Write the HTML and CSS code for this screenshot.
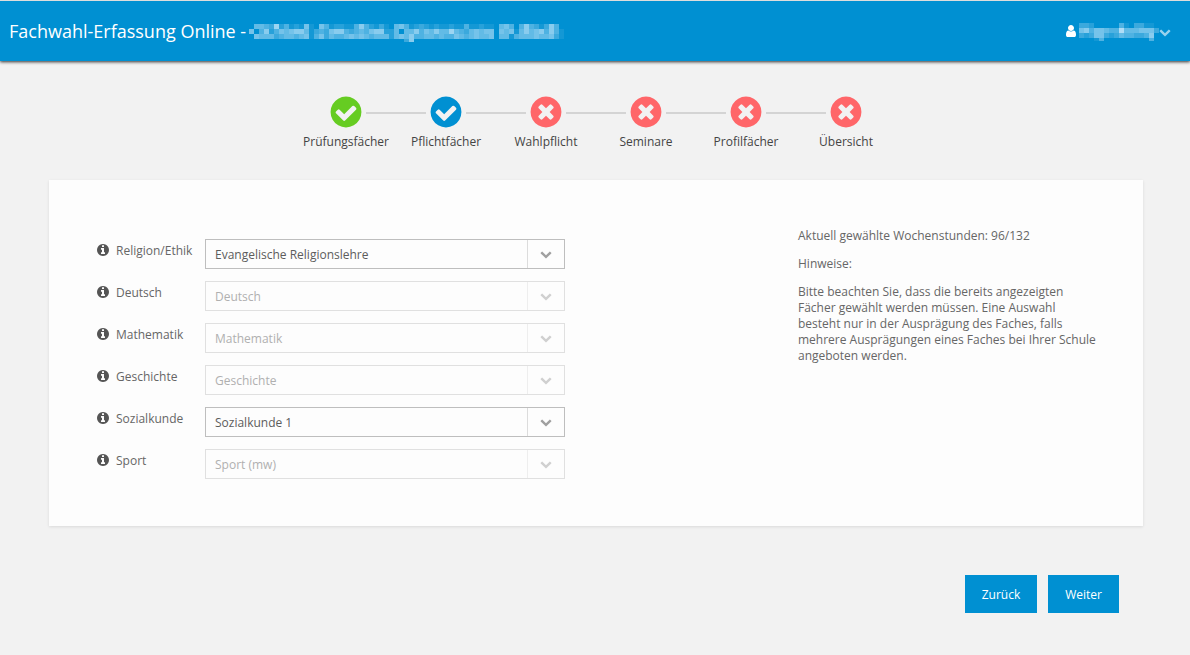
FILE: index.html
```html
<!DOCTYPE html>
<html lang="de">
<head>
  <meta charset="UTF-8" />
  <meta name="viewport" content="width=device-width, initial-scale=1.0" />
  <title>Fachwahl-Erfassung Online</title>
  <link rel="stylesheet" href="styles.css">
</head>
<body>
  <svg class="sprite" aria-hidden="true">
    <symbol id="user" viewBox="0 0 1792 1792"><path d="M1536 1399q0 109-62.500 187t-150.500 78h-854q-88 0-150.500-78t-62.500-187q0-85 8.500-160.500t31.500-152 58.500-131 94-89 134.500-34.500q131 128 313 128t313-128q76 0 134.500 34.500t94 89 58.500 131 31.500 152 8.500 160.500zm-256-887q0 159-112.500 271.500t-271.500 112.500-271.500-112.500-112.500-271.500 112.500-271.500 271.500-112.500 271.500 112.500 112.500 271.500z"/></symbol>
    <symbol id="chevron" viewBox="0 0 1792 1792"><path d="M1683 808l-742 741q-19 19-45 19t-45-19l-742-741q-19-19-19-45.500t19-45.500l166-165q19-19 45-19t45 19l531 531 531-531q19-19 45-19t45 19l166 165q19 19 19 45.500t-19 45.500z"/></symbol>
    <symbol id="info" viewBox="0 0 1792 1792"><path d="M1152 1376v-160q0-14-9-23t-23-9h-96v-512q0-14-9-23t-23-9h-320q-14 0-23 9t-9 23v160q0 14 9 23t23 9h96v320h-96q-14 0-23 9t-9 23v160q0 14 9 23t23 9h448q14 0 23-9t9-23zm-128-896v-160q0-14-9-23t-23-9h-192q-14 0-23 9t-9 23v160q0 14 9 23t23 9h192q14 0 23-9t9-23zm640 416q0 209-103 385.500t-279.500 279.500-385.500 103-385.500-103-279.500-279.500-103-385.500 103-385.500 279.500-279.500 385.500-103 385.500 103 279.500 279.500 103 385.500z"/></symbol>
    <symbol id="check" viewBox="0 0 1792 1792"><path d="M1412 734q0-28-18-46l-91-90q-19-19-45-19t-45 19l-408 407-226-226q-19-19-45-19t-45 19l-91 90q-18 18-18 46 0 27 18 45l362 362q19 19 45 19 27 0 46-19l543-543q18-18 18-45zm252 162q0 209-103 385.500t-279.500 279.500-385.500 103-385.500-103-279.500-279.500-103-385.500 103-385.500 279.500-279.500 385.500-103 385.500 103 279.500 279.500 103 385.500z"/></symbol>
    <symbol id="times" viewBox="0 0 1792 1792"><path d="M1277 1122q0-26-19-45l-181-181 181-181q19-19 19-45 0-27-19-46l-90-90q-19-19-46-19-26 0-45 19l-181 181-181-181q-19-19-45-19-27 0-46 19l-90 90q-19 19-19 46 0 26 19 45l181 181-181 181q-19 19-19 45 0 27 19 46l90 90q19 19 46 19 26 0 45-19l181-181 181 181q19 19 45 19 27 0 46-19l90-90q19-19 19-46zm387-226q0 209-103 385.500t-279.500 279.500-385.500 103-385.500-103-279.500-279.500-103-385.500 103-385.500 279.500-279.500 385.500-103 385.500 103 279.500 279.500 103 385.500z"/></symbol>
  </svg>

  <header class="topbar">
    <h1 class="title">Fachwahl-Erfassung Online -</h1>
    <svg class="mosaic school" data-rows="055438241216106412211474213105641232121121141121105640474313740 604724656775134367743454677225055746575585435656606561575674741 065553455456146354456565455525657445545446545655605514555655631 000000000000000000000000000000037"></svg>
    <button class="account" type="button" aria-label="Benutzermenü">
      <svg class="icon person-icon"><use href="#user"/></svg>
      <svg class="mosaic person" data-rows="3320000041033110 6746654495556663 3236632354433470 0001400000000040"></svg>
      <svg class="icon caret"><use href="#chevron"/></svg>
    </button>
  </header>

  <ol class="steps">
    <li class="step done"><svg><use href="#check"/></svg><span>Prüfungsfächer</span></li>
    <li class="step current"><svg><use href="#check"/></svg><span>Pflichtfächer</span></li>
    <li class="step"><svg><use href="#times"/></svg><span>Wahlpflicht</span></li>
    <li class="step"><svg><use href="#times"/></svg><span>Seminare</span></li>
    <li class="step"><svg><use href="#times"/></svg><span>Profilfächer</span></li>
    <li class="step"><svg><use href="#times"/></svg><span>Übersicht</span></li>
  </ol>

  <main class="card">
    <form class="subjects" id="subjects">
      <div class="row">
        <label for="religion"><svg class="icon"><use href="#info"/></svg>Religion/Ethik</label>
        <div class="select">
          <select id="religion"><option>Evangelische Religionslehre</option></select>
          <svg class="arrow"><use href="#chevron"/></svg>
        </div>
      </div>
      <div class="row">
        <label for="deutsch"><svg class="icon"><use href="#info"/></svg>Deutsch</label>
        <div class="select disabled">
          <select id="deutsch" disabled><option>Deutsch</option></select>
          <svg class="arrow"><use href="#chevron"/></svg>
        </div>
      </div>
      <div class="row">
        <label for="mathematik"><svg class="icon"><use href="#info"/></svg>Mathematik</label>
        <div class="select disabled">
          <select id="mathematik" disabled><option>Mathematik</option></select>
          <svg class="arrow"><use href="#chevron"/></svg>
        </div>
      </div>
      <div class="row">
        <label for="geschichte"><svg class="icon"><use href="#info"/></svg>Geschichte</label>
        <div class="select disabled">
          <select id="geschichte" disabled><option>Geschichte</option></select>
          <svg class="arrow"><use href="#chevron"/></svg>
        </div>
      </div>
      <div class="row">
        <label for="sozialkunde"><svg class="icon"><use href="#info"/></svg>Sozialkunde</label>
        <div class="select">
          <select id="sozialkunde"><option>Sozialkunde 1</option></select>
          <svg class="arrow"><use href="#chevron"/></svg>
        </div>
      </div>
      <div class="row">
        <label for="sport"><svg class="icon"><use href="#info"/></svg>Sport</label>
        <div class="select disabled">
          <select id="sport" disabled><option>Sport (mw)</option></select>
          <svg class="arrow"><use href="#chevron"/></svg>
        </div>
      </div>
    </form>

    <aside class="hints">
      <p>Aktuell gewählte Wochenstunden: 96/132</p>
      <p>Hinweise:</p>
      <p>Bitte beachten Sie, dass die bereits angezeigten Fächer gewählt werden müssen. Eine Auswahl besteht nur in der Ausprägung des Faches, falls mehrere Ausprägungen eines Faches bei Ihrer Schule angeboten werden.</p>
    </aside>
  </main>

  <div class="actions">
    <button type="button">Zurück</button>
    <button type="submit" form="subjects">Weiter</button>
  </div>

  <script src="mosaic.js"></script>
</body>
</html>
```
FILE: styles.css
```css
* {
  box-sizing: border-box;
}
body {
  margin: 0;
  font-family: "Open Sans", sans-serif;
  font-size: 12px;
  line-height: 16px;
  color: #666;
  background: #f2f2f2;
}
.sprite {
  display: none;
}
.icon {
  width: 14px;
  height: 14px;
  fill: currentColor;
  flex: none;
}

/* header */
.topbar {
  display: flex;
  align-items: center;
  height: 61px;
  padding: 0 19px 0 9px;
  border-top: 1px solid #ddd;
  background: #0090d2;
  color: #fff;
  box-shadow: 0 1px 3px rgba(0, 0, 0, 0.8);
}
.title {
  margin: 0;
  font-size: 18px;
  font-weight: 400;
  line-height: 24px;
}
.mosaic {
  height: 20px;
  fill: #c3e6fa;
  shape-rendering: crispEdges;
}
.school {
  width: 315px;
  margin: 6px 0 0 3px;
}
.account {
  display: flex;
  align-items: center;
  margin-left: auto;
  padding: 0;
  border: 0;
  background: none;
  color: #fff;
}
.person-icon {
  width: 16px;
}
.person {
  width: 80px;
  margin-top: 4px;
}
.caret {
  width: 12px;
  height: 12px;
  margin-top: 2px;
  opacity: 0.6;
}

/* progress */
.steps {
  display: flex;
  justify-content: center;
  margin: 33px 0 0;
  padding: 0 0 0 2px;
  list-style: none;
  color: #444;
}
.step {
  position: relative;
  display: flex;
  flex-direction: column;
  align-items: center;
  width: 100px;
}
.step svg {
  width: 36px;
  height: 36px;
  fill: #ff6669;
}
.step span {
  margin-top: 4px;
}
.step.done svg {
  fill: #66cc22;
}
.step.current svg {
  fill: #0090d2;
}
.step + .step::before {
  content: "";
  position: absolute;
  top: 18px;
  left: -30px;
  width: 60px;
  height: 2px;
  background: #d4d4d4;
}

/* form */
.card {
  display: flex;
  justify-content: space-between;
  margin: 30px 47px 0 49px;
  padding: 48px 45px 35px 47px;
  background: #fdfdfd;
  box-shadow: 0 1px 3px rgba(0, 0, 0, 0.1);
}
.subjects {
  margin-top: 11px;
}
.row {
  display: flex;
  margin-bottom: 12px;
}
.row label {
  display: flex;
  align-items: center;
  gap: 6px;
  width: 109px;
  height: 24px;
}
.row label .icon {
  margin-bottom: 2px;
  color: #555;
}
.select {
  position: relative;
  width: 360px;
  height: 30px;
  border: 1px solid #bebebe;
}
.select select {
  width: 100%;
  height: 100%;
  padding: 2px 46px 0 9px;
  border: 0;
  border-radius: 0;
  appearance: none;
  background: none;
  font: inherit;
  color: #5c5c5c;
  opacity: 1;
}
.select .arrow {
  position: absolute;
  top: 0;
  right: 0;
  width: 37px;
  height: 28px;
  padding: 8px 12px;
  border-left: 1px solid #dcdcdc;
  fill: #a0a0a0;
  pointer-events: none;
}
.select.disabled {
  border-color: #e0e0e0;
}
.select.disabled select {
  color: #b0b0b0;
}
.select.disabled .arrow {
  border-color: #eee;
  fill: #d0d0d0;
}
.hints {
  width: 300px;
}
.hints p {
  margin: 0 0 12px;
}

/* buttons */
.actions {
  display: flex;
  justify-content: flex-end;
  gap: 11px;
  margin: 49px 71px 42px 0;
}
.actions button {
  height: 38px;
  padding: 0 17px;
  border: 0;
  background: #0090d2;
  color: #fff;
  font: 500 12px "Open Sans", sans-serif;
}
```
FILE: mosaic.js
```js
// paints the pixelated names, one digit = brightness of one 5px block
document.querySelectorAll('.mosaic').forEach(svg => {
  svg.dataset.rows.split(' ').forEach((row, y) => {
    [...row].forEach((level, x) => {
      if (level === '0') return;
      const rect = document.createElementNS('http://www.w3.org/2000/svg', 'rect');
      rect.setAttribute('x', x * 5);
      rect.setAttribute('y', y * 5);
      rect.setAttribute('width', 5);
      rect.setAttribute('height', y === 3 ? 3 : 5);
      rect.setAttribute('fill-opacity', level / 10);
      svg.appendChild(rect);
    });
  });
});
```
